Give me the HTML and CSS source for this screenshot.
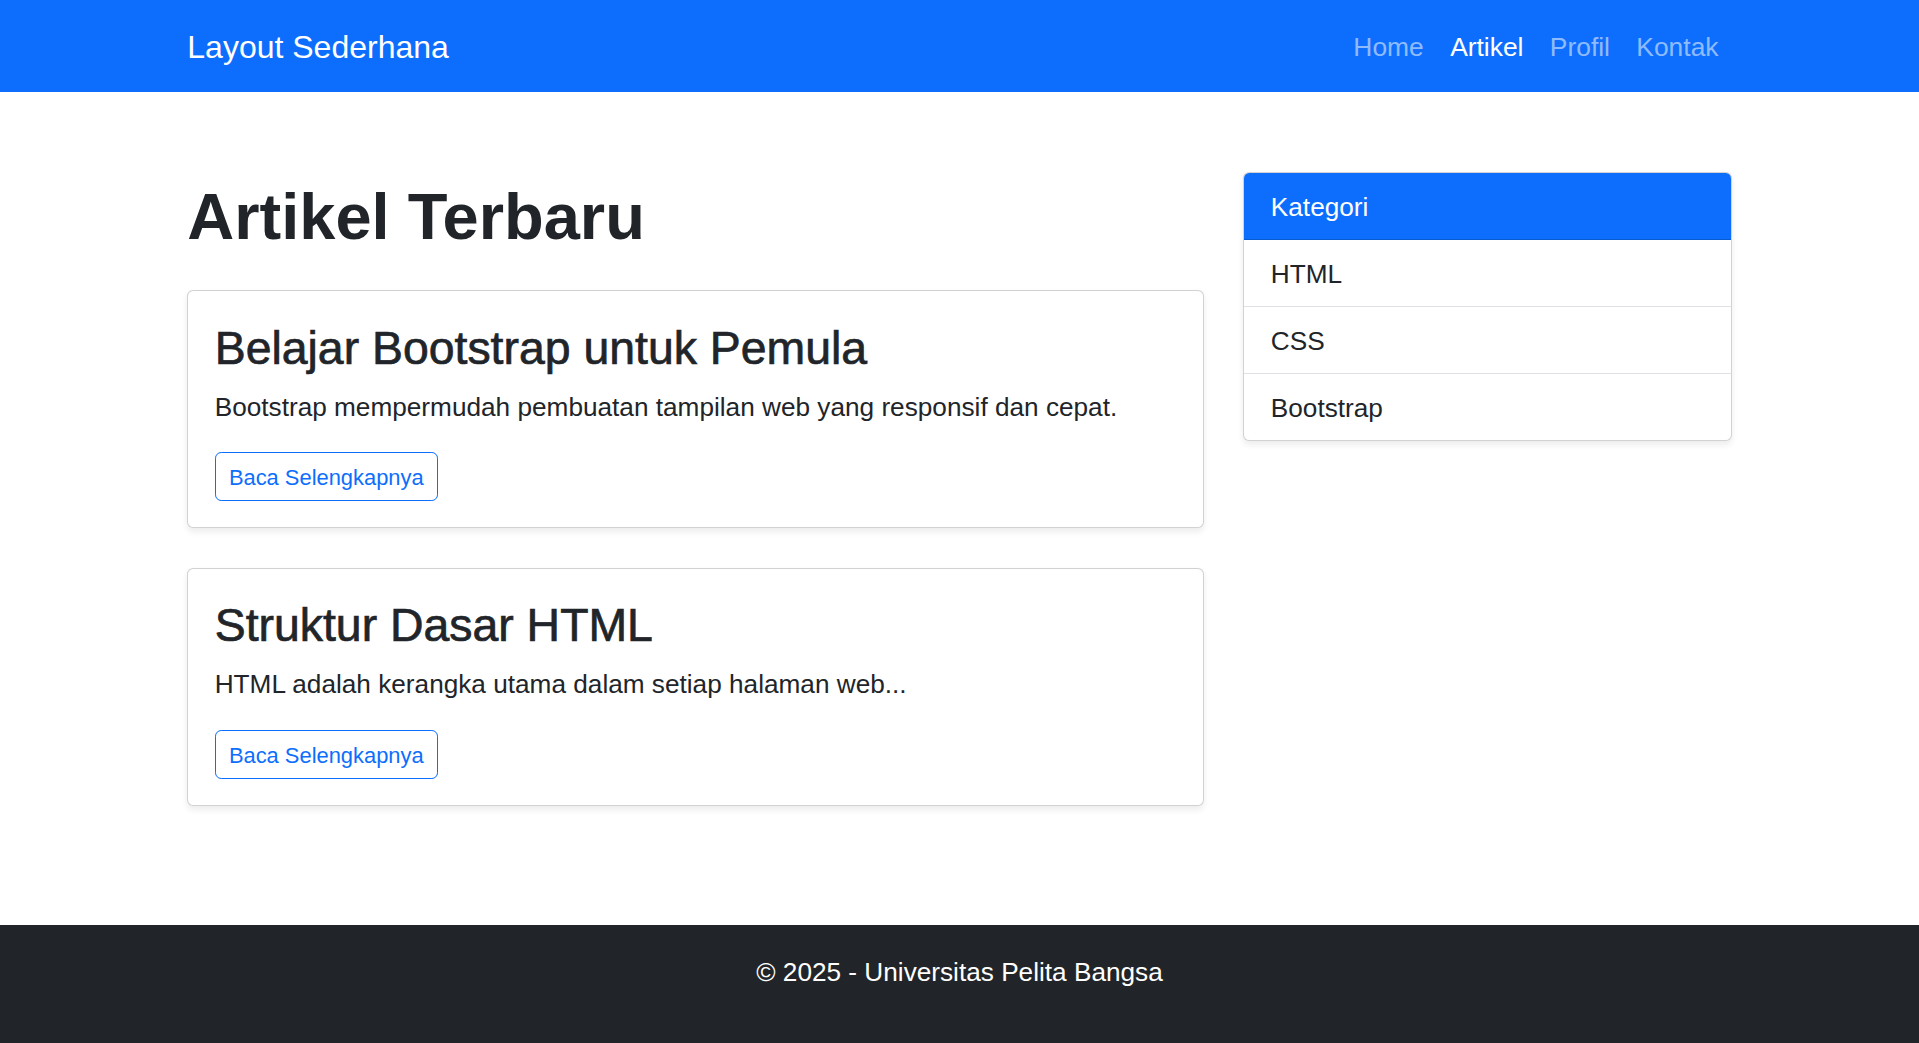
FILE: index.html
```html
<!DOCTYPE html>
<html lang="id">
<head>
<meta charset="utf-8">
<title>Layout Sederhana</title>
<link rel="stylesheet" href="styles.css">
</head>
<body>
<nav class="navbar">
  <div class="container navbar-inner">
    <a class="brand" href="#">Layout Sederhana</a>
    <ul class="nav-links">
      <li><a class="nav-link" href="#">Home</a></li>
      <li><a class="nav-link active" href="#">Artikel</a></li>
      <li><a class="nav-link" href="#">Profil</a></li>
      <li><a class="nav-link" href="#">Kontak</a></li>
    </ul>
  </div>
</nav>

<main class="container main">
  <div class="layout">
    <section class="articles">
      <h1 class="page-title">Artikel Terbaru</h1>

      <article class="card">
        <div class="card-body">
          <h3 class="card-title">Belajar Bootstrap untuk Pemula</h3>
          <p class="card-text">Bootstrap mempermudah pembuatan tampilan web yang responsif dan cepat.</p>
          <a class="btn-outline" href="#">Baca Selengkapnya</a>
        </div>
      </article>

      <article class="card">
        <div class="card-body">
          <h3 class="card-title">Struktur Dasar HTML</h3>
          <p class="card-text">HTML adalah kerangka utama dalam setiap halaman web...</p>
          <a class="btn-outline" href="#">Baca Selengkapnya</a>
        </div>
      </article>
    </section>

    <aside class="sidebar">
      <div class="card">
        <div class="card-header">Kategori</div>
        <ul class="list-group">
          <li class="list-item">HTML</li>
          <li class="list-item">CSS</li>
          <li class="list-item">Bootstrap</li>
        </ul>
      </div>
    </aside>
  </div>
</main>

<footer class="footer">
  <p class="footer-text">© 2025 - Universitas Pelita Bangsa</p>
</footer>
</body>
</html>
```

FILE: styles.css
```css
* {
  box-sizing: border-box;
}

html, body {
  margin: 0;
  padding: 0;
}

html {
  background: #212529;
}

body {
  font-family: "Liberation Sans", Arial, sans-serif;
  font-size: 26.2px;
  line-height: 39.6px;
  color: #212529;
  background: #ffffff;
}

a {
  text-decoration: none;
}

.container {
  max-width: 1584px;
  margin: 0 auto;
  padding: 0 19.8px;
}

/* Navbar */
.navbar {
  background: #0d6efd;
  padding: 13.2px 0;
}

.navbar-inner {
  display: flex;
  align-items: center;
  justify-content: space-between;
}

.brand {
  color: #ffffff;
  font-size: 32px;
  line-height: 49.5px;
  padding: 10px 0 6.5px;
}

.nav-links {
  display: flex;
  list-style: none;
  margin: 0;
  padding: 0;
}

.nav-link {
  display: block;
  color: rgba(255, 255, 255, 0.55);
  font-size: 26.4px;
  line-height: 39.6px;
  padding: 15px 13.2px 11.4px;
}

.nav-link.active {
  color: #ffffff;
}

/* Main */
.main {
  margin-top: 79.2px;
  margin-bottom: 79.2px;
}

.layout {
  display: grid;
  grid-template-columns: 1016fr 488fr;
  column-gap: 39.6px;
  align-items: start;
}

.page-title {
  font-size: 65px;
  font-weight: 700;
  line-height: 79.2px;
  margin: 0 0 34.6px;
  padding-top: 5px;
}

.card {
  background: #ffffff;
  border: 1px solid rgba(0, 0, 0, 0.175);
  border-radius: 6.2px;
  box-shadow: 0 3.3px 6.6px rgba(0, 0, 0, 0.075);
  overflow: hidden;
}

.articles .card {
  margin-bottom: 39.6px;
}

.card-body {
  padding: 26.4px;
}

.card-title {
  font-size: 46.4px;
  font-weight: 400;
  -webkit-text-stroke: 0.7px #212529;
  line-height: 55.4px;
  padding-top: 3px;
  margin: 0 0 10.2px;
}

.card-text {
  padding-top: 1.5px;
  margin: 0 0 24.9px;
}

.btn-outline {
  display: inline-block;
  color: #0d6efd;
  border: 1px solid #0d6efd;
  border-radius: 6.2px;
  font-size: 21.9px;
  line-height: 33.5px;
  padding: 7.6px 13.2px 5.6px;
}

/* Sidebar */
.card-header {
  background: #0d6efd;
  color: #ffffff;
  padding: 15px 26.4px 11.4px;
  border-bottom: 1px solid rgba(0, 0, 0, 0.175);
}

.list-group {
  list-style: none;
  margin: 0;
  padding: 0;
}

.list-item {
  padding: 15px 26.4px 11.4px;
  border-bottom: 1px solid #dee2e6;
}

.list-item:last-child {
  border-bottom: 0;
}

/* Footer */
.footer {
  background: #212529;
  color: #ffffff;
  text-align: center;
  padding: 26.4px 0 0;
}

.footer-text {
  margin: 0;
  padding: 1.5px 0 49.5px;
}
```
